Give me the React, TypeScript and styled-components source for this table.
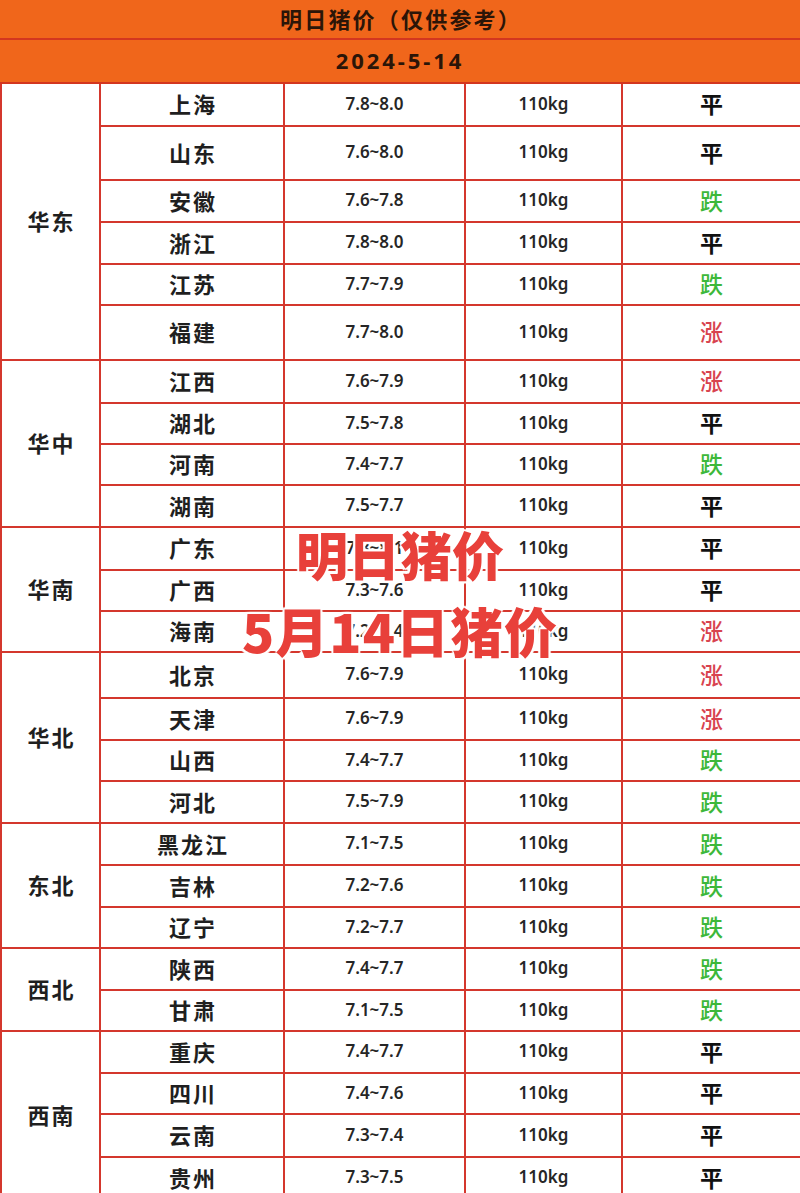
import React from "react";
import styled, { createGlobalStyle } from "styled-components";

const GlobalStyle = createGlobalStyle`
  html, body { margin: 0; padding: 0; background: #ffffff; }
  body { font-family: "Noto Sans", "Noto Sans CJK SC", sans-serif; }
`;

type Trend = "平" | "跌" | "涨";
interface Province { name: string; price: string; trend: Trend; h: number; }
interface Region { name: string; items: Province[]; }

const data: Region[] = [
  { name: "华东", items: [
    { name: "上海", price: "7.8~8.0", trend: "平", h: 41 },
    { name: "山东", price: "7.6~8.0", trend: "平", h: 52 },
    { name: "安徽", price: "7.6~7.8", trend: "跌", h: 40 },
    { name: "浙江", price: "7.8~8.0", trend: "平", h: 40 },
    { name: "江苏", price: "7.7~7.9", trend: "跌", h: 39 },
    { name: "福建", price: "7.7~8.0", trend: "涨", h: 53 },
  ]},
  { name: "华中", items: [
    { name: "江西", price: "7.6~7.9", trend: "涨", h: 41 },
    { name: "湖北", price: "7.5~7.8", trend: "平", h: 39 },
    { name: "河南", price: "7.4~7.7", trend: "跌", h: 39 },
    { name: "湖南", price: "7.5~7.7", trend: "平", h: 40 },
  ]},
  { name: "华南", items: [
    { name: "广东", price: "7.8~8.1", trend: "平", h: 41 },
    { name: "广西", price: "7.3~7.6", trend: "平", h: 39 },
    { name: "海南", price: "7.2~7.4", trend: "涨", h: 39 },
  ]},
  { name: "华北", items: [
    { name: "北京", price: "7.6~7.9", trend: "涨", h: 44 },
    { name: "天津", price: "7.6~7.9", trend: "涨", h: 40 },
    { name: "山西", price: "7.4~7.7", trend: "跌", h: 39 },
    { name: "河北", price: "7.5~7.9", trend: "跌", h: 40 },
  ]},
  { name: "东北", items: [
    { name: "黑龙江", price: "7.1~7.5", trend: "跌", h: 40 },
    { name: "吉林", price: "7.2~7.6", trend: "跌", h: 40 },
    { name: "辽宁", price: "7.2~7.7", trend: "跌", h: 39 },
  ]},
  { name: "西北", items: [
    { name: "陕西", price: "7.4~7.7", trend: "跌", h: 40 },
    { name: "甘肃", price: "7.1~7.5", trend: "跌", h: 39 },
  ]},
  { name: "西南", items: [
    { name: "重庆", price: "7.4~7.7", trend: "平", h: 40 },
    { name: "四川", price: "7.4~7.6", trend: "平", h: 39 },
    { name: "云南", price: "7.3~7.4", trend: "平", h: 41 },
    { name: "贵州", price: "7.3~7.5", trend: "平", h: 40 },
  ]},
];

const Page = styled.div`
  width: 800px;
  height: 1193px;
  overflow: hidden;
  background: #ffffff;
  position: relative;
`;

const HeaderBar = styled.div<{ $h: number }>`
  height: ${(p) => p.$h}px;
  background: #f0661b;
  border-bottom: 2px solid #d3361f;
  display: flex;
  align-items: center;
  justify-content: center;
  color: #2b1508;
  font-family: "Noto Sans", "Noto Sans CJK SC", sans-serif;
  font-weight: 700;
`;

const Title = styled.span`
  font-size: 22px;
  letter-spacing: 2.2px;
  padding-left: 2px;
  padding-bottom: 2px;
`;

const DateText = styled.span`
  font-size: 22px;
  letter-spacing: 2.9px;
  padding-bottom: 2px;
`;

const TableWrap = styled.div`
  position: relative;
`;

const Grid = styled.div<{ $rows: string }>`
  display: grid;
  grid-template-columns: 97px 182px 179px 155px 1fr;
  grid-template-rows: ${(p) => p.$rows};
  gap: 2px;
  padding-left: 2px;
  background: #d4372d;
`;

const Cell = styled.div`
  background: #ffffff;
  display: flex;
  align-items: center;
  justify-content: center;
  color: #1f1f1f;
  padding-bottom: 3px;
`;

const RegionCell = styled(Cell)<{ $span: number }>`
  grid-column: 1;
  grid-row: span ${(p) => p.$span};
  font-family: "Noto Sans CJK SC", sans-serif;
  font-size: 22px;
  font-weight: 700;
  letter-spacing: 2px;
  padding-left: 2px;
`;

const NameCell = styled(Cell)`
  font-family: "Noto Sans CJK SC", sans-serif;
  font-size: 22px;
  font-weight: 700;
  letter-spacing: 2px;
  padding-left: 2px;
`;

const NumCell = styled(Cell)`
  font-family: "Noto Sans", "Noto Sans CJK SC", sans-serif;
  font-size: 17px;
  font-weight: 600;
  color: #262626;
`;

const trendColor: Record<Trend, string> = {
  "平": "#111111",
  "跌": "#3db83a",
  "涨": "#d8434f",
};

const TrendCell = styled(Cell)<{ $trend: Trend }>`
  font-family: "Noto Sans CJK SC", sans-serif;
  font-size: 23px;
  font-weight: ${(p) => (p.$trend === "平" ? 700 : 500)};
  color: ${(p) => trendColor[p.$trend]};
`;

const Watermark = styled.div`
  position: absolute;
  left: 0;
  right: 0;
  top: 431px;
  display: flex;
  flex-direction: column;
  align-items: center;
  font-family: "Noto Sans CJK SC", sans-serif;
  font-weight: 900;
  color: #e8403a;
  pointer-events: none;
  text-shadow:
    0 0 2px #fff, 0 0 2px #fff, 2px 2px 1px #fff, -2px -2px 1px #fff,
    2px -2px 1px #fff, -2px 2px 1px #fff, 0 2px 1px #fff, 0 -2px 1px #fff;
`;

const WmLine = styled.div<{ $size: number; $ls: number }>`
  font-size: ${(p) => p.$size}px;
  letter-spacing: ${(p) => p.$ls}px;
  line-height: 1;
  height: 77px;
  display: flex;
  align-items: center;
`;

export default function App() {
  const rows = data.flatMap((r) => r.items.map((i) => `${i.h}px`)).join(" ");
  return (
    <>
      <GlobalStyle />
      <Page>
        <HeaderBar $h={38}>
          <Title>明日猪价（仅供参考）</Title>
        </HeaderBar>
        <HeaderBar $h={42}>
          <DateText>2024-5-14</DateText>
        </HeaderBar>
        <TableWrap>
          <Grid $rows={rows}>
            {data.map((region) => (
              <React.Fragment key={region.name}>
                <RegionCell $span={region.items.length}>{region.name}</RegionCell>
                {region.items.map((p) => (
                  <React.Fragment key={p.name}>
                    <NameCell>{p.name}</NameCell>
                    <NumCell>{p.price}</NumCell>
                    <NumCell>110kg</NumCell>
                    <TrendCell $trend={p.trend}>{p.trend}</TrendCell>
                  </React.Fragment>
                ))}
              </React.Fragment>
            ))}
          </Grid>
          <Watermark>
            <WmLine $size={52} $ls={0}>明日猪价</WmLine>
            <WmLine $size={53} $ls={1}>5月14日猪价</WmLine>
          </Watermark>
        </TableWrap>
      </Page>
    </>
  );
}
